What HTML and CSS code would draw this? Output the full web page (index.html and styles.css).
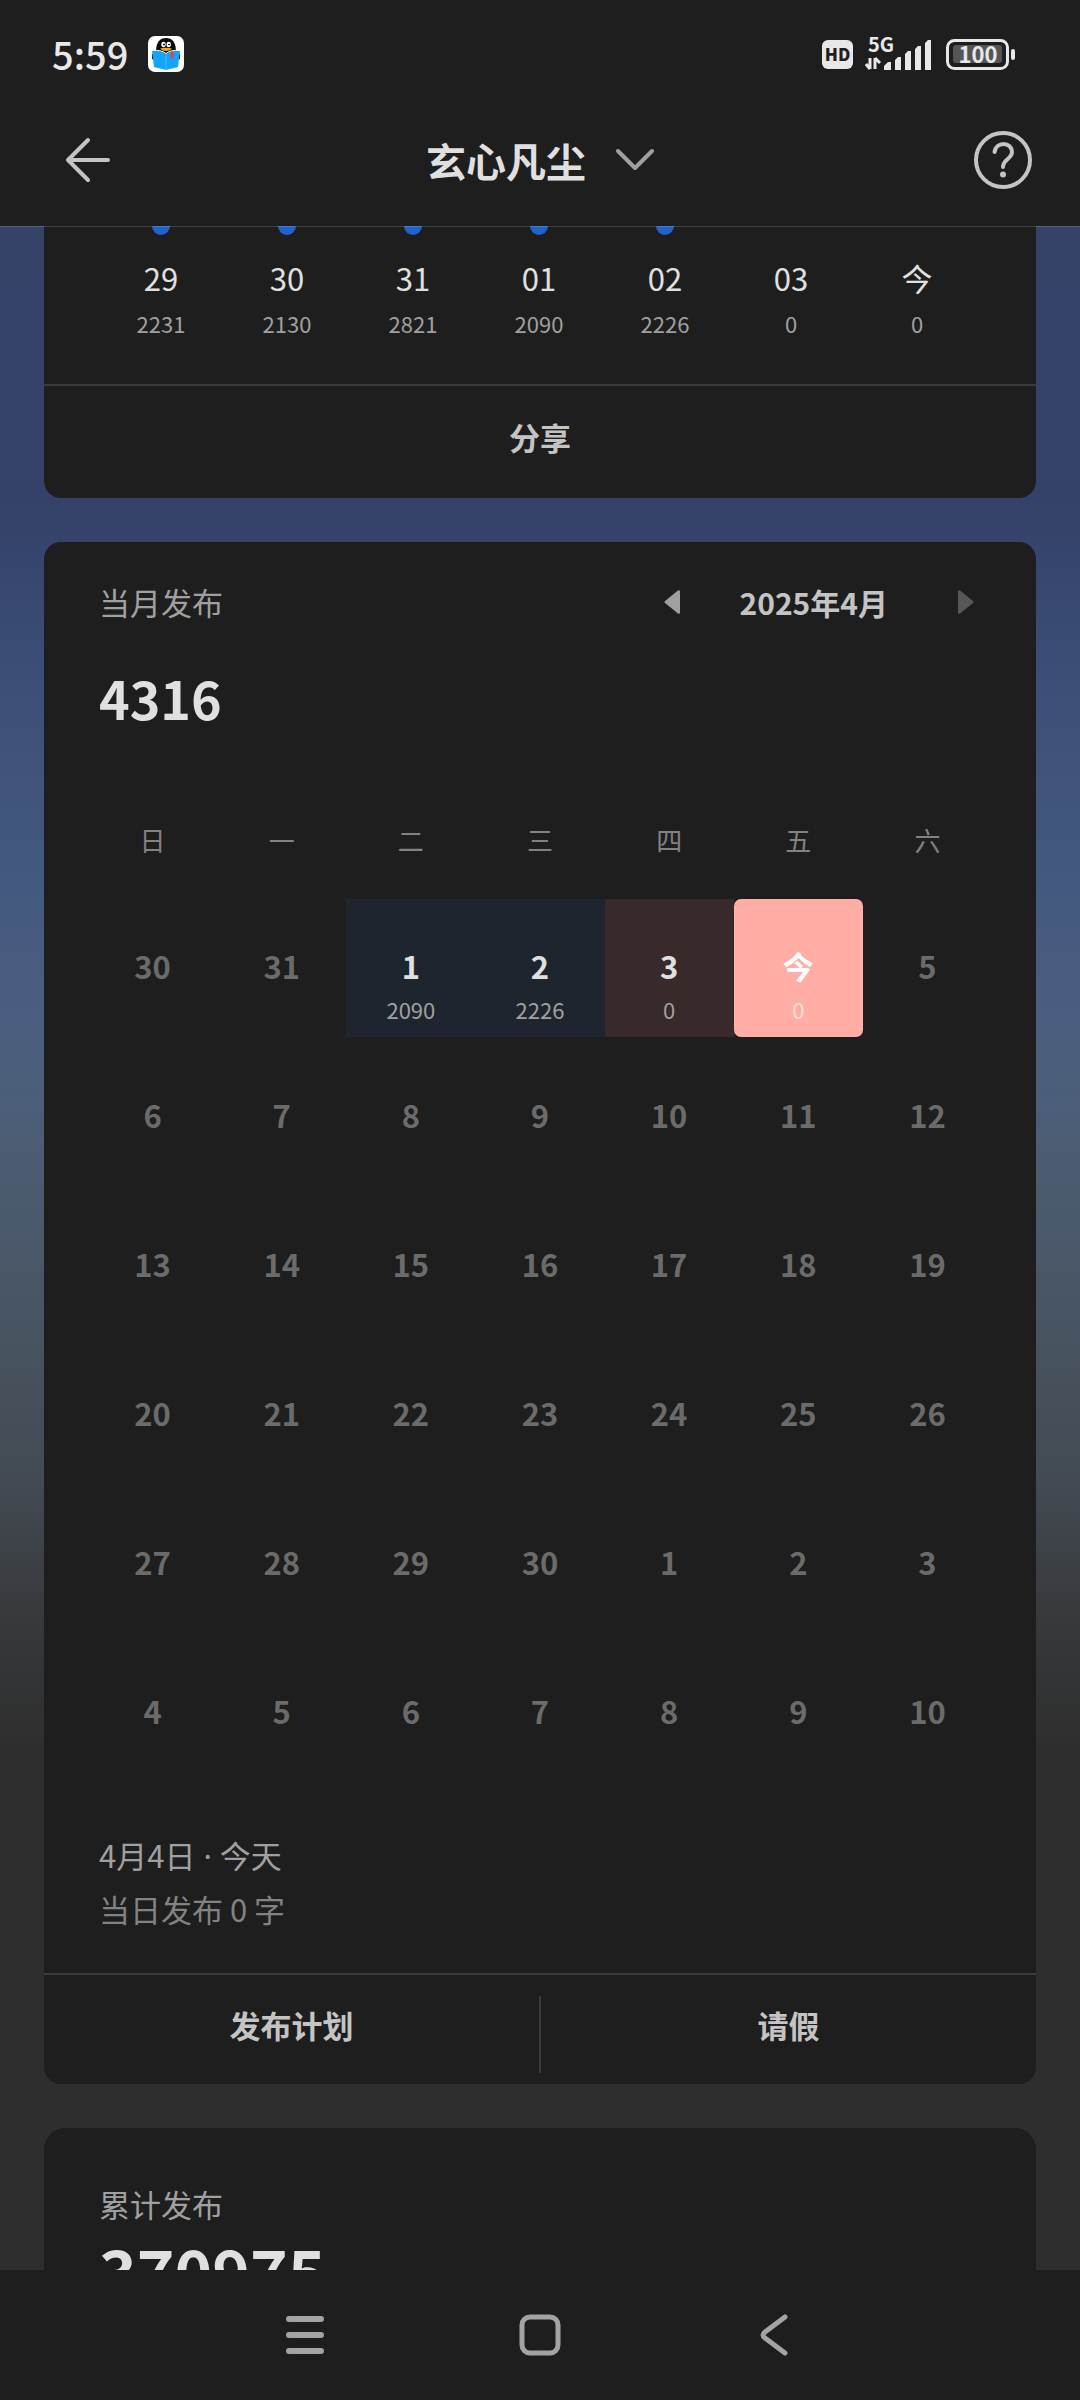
FILE: index.html
```
<!DOCTYPE html>
<html lang="zh-CN">
<head>
    <meta charset="UTF-8">
    <meta name="viewport" content="width=device-width, initial-scale=1.0">
    <title>玄心凡尘</title>
    <link rel="stylesheet" href="styles.css">
</head>
<body>
    <header class="header">
        <div class="status-bar">
            <span class="time">5:59</span>
            <svg class="app-icon" width="36" height="36" viewBox="0 0 36 36" aria-hidden="true">
                <rect width="36" height="36" rx="7" fill="#fff"/>
                <path d="M8 16C8 6 12 2 18 2s10 4 10 14l-10 4z" fill="#0b0b0d"/>
                <path d="M4 18l3 1v5l-3-1zM32 18l-3 1v5l3-1z" fill="#0b0b0d"/>
                <ellipse cx="15.5" cy="8.5" rx="2.2" ry="2.8" fill="#fff"/>
                <ellipse cx="20.7" cy="8.5" rx="2.2" ry="2.8" fill="#fff"/>
                <circle cx="16" cy="8.5" r="1" fill="#0b0b0d"/>
                <path d="M20 9q1-2 2 0" stroke="#0b0b0d" fill="none"/>
                <path d="M12 12.5q6-1.5 12 0-2 2.500-6 2.500t-6-2.500z" fill="#f5a81c"/>
                <path d="M4 15q9-1 14 3 5-4 14-3l-2 16-12 3-12-3z" fill="#12a5fb"/>
                <path d="M4 14.500q9-1 14 3 5-4 14-3" stroke="#fff" fill="none"/>
                <path d="M18 19v15" stroke="#4dbcff"/>
                <path d="M22.500 16l3-1v8l-1.500-1-1.500 1z" fill="#d2455e"/>
            </svg>
            <svg class="status-icons" width="196" height="60" viewBox="0 -12 196 60" aria-hidden="true">
                <rect x="2" y="4" width="31" height="29" rx="6" fill="#e8e8e8"/>
                <text class="status-hd" x="17.5" y="25" text-anchor="middle">HD</text>
                <text class="status-5g" x="48" y="16">5G</text>
                <path d="M50 22v11M50 33l-4-5M55 33V22M55 22l5 5" stroke="#e8e8e8" stroke-width="3" fill="none"/>
                <path d="M64 34v-4l4-4h3v8zM75 34V24l3-3h3v13zM85 34V18l3-3h3v19zM95 34V13l3-3h3v24zM105 34V7l3-3h3v30z" fill="#e8e8e8"/>
                <rect x="127.5" y="4.5" width="60" height="28" rx="7" fill="none" stroke="#e8e8e8" stroke-width="3"/>
                <rect x="133" y="9" width="49" height="18" rx="3" fill="#555"/>
                <text class="status-battery" x="158" y="27" text-anchor="middle">100</text>
                <rect x="191" y="13" width="4" height="11" rx="2" fill="#e8e8e8"/>
            </svg>
        </div>
        <div class="toolbar">
            <button class="icon-btn back" aria-label="返回">
                <svg width="48" height="48" viewBox="0 0 48 48" fill="none" stroke="#c4c4c4" stroke-width="4" stroke-linecap="round" stroke-linejoin="round">
                    <path d="M24 4L4 24l20 20M4 24h40"/>
                </svg>
            </button>
            <button class="book-select">
                <span>玄心凡尘</span>
                <svg width="38" height="24" viewBox="0 0 38 24" fill="none" stroke="#a0a0a0" stroke-width="4" stroke-linecap="round" stroke-linejoin="round">
                    <path d="M2 3l17 17L36 3"/>
                </svg>
            </button>
            <button class="icon-btn help" aria-label="帮助">
                <svg width="60" height="60" viewBox="0 0 60 60" fill="none" stroke="#c4c4c4" stroke-width="4" stroke-linecap="round">
                    <circle cx="30" cy="30" r="27"/>
                    <path d="M21.500 22c1-5 4.500-8 9-8 5 0 8.500 3.500 8.500 8 0 7-9 7-9 15"/>
                    <circle cx="30" cy="44.500" r="3" fill="#c4c4c4" stroke="none"/>
                </svg>
            </button>
        </div>
    </header>

    <main class="content">
        <section class="card chart-card">
            <ol class="week">
                <li><i class="dot"></i><span class="week-day">29</span><span class="count">2231</span></li>
                <li><i class="dot"></i><span class="week-day">30</span><span class="count">2130</span></li>
                <li><i class="dot"></i><span class="week-day">31</span><span class="count">2821</span></li>
                <li><i class="dot"></i><span class="week-day">01</span><span class="count">2090</span></li>
                <li><i class="dot"></i><span class="week-day">02</span><span class="count">2226</span></li>
                <li><i class="dot none"></i><span class="week-day">03</span><span class="count">0</span></li>
                <li><i class="dot none"></i><span class="week-day">今</span><span class="count">0</span></li>
            </ol>
            <div class="actions">
                <button>分享</button>
            </div>
        </section>

        <section class="card calendar-card">
            <div class="calendar-top">
                <h2 class="label">当月发布</h2>
                <div class="month-nav">
                    <button class="month-btn" aria-label="上个月">
                        <svg width="16" height="24" viewBox="0 0 16 24"><path d="M16 1.500v21q0 2-2 1L1 13q-1-1 0-2L14 .5q2-1 2 1z" fill="#a0a0a0"/></svg>
                    </button>
                    <span class="month">2025年4月</span>
                    <button class="month-btn next" aria-label="下个月">
                        <svg width="16" height="24" viewBox="0 0 16 24"><path d="M0 1.500v21q0 2 2 1L15 13q1-1 0-2L2 .5q-2-1-2 1z" fill="#575757"/></svg>
                    </button>
                </div>
            </div>
            <p class="month-total">4316</p>

            <table class="calendar">
                <thead>
                    <tr><th>日</th><th>一</th><th>二</th><th>三</th><th>四</th><th>五</th><th>六</th></tr>
                </thead>
                <tbody>
                    <tr>
                        <td>30</td>
                        <td>31</td>
                        <td class="done">1<span class="count">2090</span></td>
                        <td class="done">2<span class="count">2226</span></td>
                        <td class="missed">3<span class="count">0</span></td>
                        <td class="today">今<span class="count">0</span></td>
                        <td>5</td>
                    </tr>
                    <tr><td>6</td><td>7</td><td>8</td><td>9</td><td>10</td><td>11</td><td>12</td></tr>
                    <tr><td>13</td><td>14</td><td>15</td><td>16</td><td>17</td><td>18</td><td>19</td></tr>
                    <tr><td>20</td><td>21</td><td>22</td><td>23</td><td>24</td><td>25</td><td>26</td></tr>
                    <tr><td>27</td><td>28</td><td>29</td><td>30</td><td>1</td><td>2</td><td>3</td></tr>
                    <tr><td>4</td><td>5</td><td>6</td><td>7</td><td>8</td><td>9</td><td>10</td></tr>
                </tbody>
            </table>

            <div class="summary">
                <p>4月4日<span class="sep"> · </span>今天</p>
                <p class="muted">当日发布 0 字</p>
            </div>
            <div class="actions">
                <button>发布计划</button>
                <button>请假</button>
            </div>
        </section>

        <section class="card total-card">
            <h2 class="label">累计发布</h2>
            <p class="total">370975</p>
        </section>
    </main>

    <nav class="nav-bar">
        <button aria-label="菜单">
            <svg width="44" height="44" viewBox="0 0 44 44" stroke="#a3a3a3" stroke-width="6" stroke-linecap="round">
                <path d="M6 6h32M6 22h32M6 38h32"/>
            </svg>
        </button>
        <button aria-label="主页">
            <svg width="44" height="44" viewBox="0 0 44 44" fill="none" stroke="#a3a3a3" stroke-width="5">
                <rect x="4" y="4" width="36" height="36" rx="8"/>
            </svg>
        </button>
        <button aria-label="返回">
            <svg width="44" height="44" viewBox="0 0 44 44" fill="none" stroke="#a3a3a3" stroke-width="5" stroke-linecap="round">
                <path d="M32 4L12 19q-4 3 0 6l20 15"/>
            </svg>
        </button>
    </nav>
</body>
</html>
```
FILE: styles.css
```
* {
    box-sizing: border-box;
    margin: 0;
    padding: 0;
}
body {
    display: flex;
    flex-direction: column;
    height: 100vh;
    background-color: #1e1e1e;
    color: #e0e0e0;
    font-family: 'Noto Sans CJK SC', 'Noto Sans', sans-serif;
    font-size: 31px;
    line-height: 40px;
    overflow: hidden;
}
button {
    background: none;
    border: none;
    color: inherit;
    font: inherit;
    cursor: pointer;
}
svg {
    display: block;
}

/* header */
.header {
    position: relative;
    z-index: 1;
    margin-bottom: -1px;
    background-color: #1e1e1e;
    background-clip: padding-box;
    border-bottom: 1px solid rgba(255, 255, 255, 0.15);
}
.status-bar {
    display: flex;
    align-items: center;
    height: 108px;
    padding: 0 64px 0 52px;
    color: #e8e8e8;
}
.time {
    font-size: 38px;
    font-weight: 500;
}
.app-icon {
    margin-left: 20px;
}
.status-icons {
    margin-left: auto;
}
.status-hd {
    font-size: 17px;
    font-weight: 900;
    fill: #1e1e1e;
}
.status-5g {
    font-size: 20px;
    font-weight: 700;
    fill: #e8e8e8;
}
.status-battery {
    font-size: 22px;
    font-weight: 700;
    fill: #e8e8e8;
}
.toolbar {
    display: grid;
    grid-template-columns: 1fr auto 1fr;
    align-items: center;
    height: 118px;
    padding: 0 47px 14px;
}
.icon-btn {
    justify-self: start;
}
.back {
    padding-left: 17px;
}
.help {
    justify-self: end;
}
.book-select {
    display: flex;
    align-items: center;
    gap: 30px;
    font-size: 40px;
    font-weight: 700;
}

/* cards */
.content {
    flex: 1;
    display: flex;
    flex-direction: column;
    gap: 44px;
    min-height: 0;
    padding: 0 44px;
    overflow: hidden;
    background: linear-gradient(#364369 0, #344169 277px, #3c4f78 459px, #43587f 641px, #4a5f7f 798px, #4c5d74 919px, #47535f 1125px, #434a52 1259px, #36383a 1404px, #2e2e2e 1525px);
}
.card {
    flex-shrink: 0;
    background-color: #1e1e1e;
    border-radius: 17px;
}
.label {
    font-size: 31px;
    font-weight: 400;
    color: #a0a0a0;
}
.count {
    display: block;
    font-size: 22px;
    font-weight: 400;
    line-height: 24px;
    color: #a0a0a0;
}
.actions {
    display: flex;
    padding: 21px 0 11px;
    border-top: 2px solid #3a3a3a;
}
.actions button {
    flex: 1;
    height: 77px;
    padding-bottom: 20px;
    font-weight: 700;
    color: #c4c4c4;
}
.actions button + button {
    border-left: 2px solid #3a3a3a;
}

/* last 7 days */
.chart-card {
    margin-top: -9px;
    border-top-left-radius: 0;
    border-top-right-radius: 0;
}
.chart-card .actions button {
    height: 80px;
}
.week {
    display: flex;
    padding: 0 56px 49px 54px;
    list-style: none;
    text-align: center;
}
.week li {
    flex: 1;
}
.dot {
    display: block;
    width: 18px;
    height: 18px;
    margin: 0 auto;
    border-radius: 50%;
    background-color: #2162cc;
}
.none {
    visibility: hidden;
}
.week-day {
    display: block;
    margin: 23px 0 13px;
}

/* calendar */
.calendar-card > :not(.actions) {
    margin-left: 44px;
    margin-right: 44px;
}
.calendar-top {
    display: flex;
    justify-content: space-between;
    align-items: center;
    padding: 40px 0 0 11px;
}
.month-nav {
    display: flex;
    align-items: center;
    gap: 42px;
}
.month {
    font-size: 30px;
    font-weight: 700;
    color: #c4c4c4;
}
.month-btn {
    display: flex;
    justify-content: center;
    width: 52px;
}
.next {
    margin-left: 10px;
}
.month-total {
    padding-left: 11px;
    margin-top: 46px;
    font-size: 52px;
    font-weight: 700;
    line-height: 60px;
}
.calendar {
    width: calc(100% - 88px);
    margin-top: 53px;
    table-layout: fixed;
    border-spacing: 0 11px;
    text-align: center;
}
.calendar th {
    height: 96px;
    font-size: 26px;
    font-weight: 400;
    color: #828282;
}
.calendar td {
    height: 138px;
    padding-top: 47px;
    vertical-align: top;
    font-size: 31px;
    font-weight: 700;
    color: #6b6b6b;
}
.calendar .count {
    margin-top: 11px;
}
.calendar .done {
    background-color: #1f252e;
    color: #e0e0e0;
}
.calendar .missed {
    background-color: #38292a;
    color: #e0e0e0;
}
.calendar .today {
    background-color: #ffada5;
    border-radius: 7px;
    color: #fff;
}
.today .count {
    color: #ffdeda;
}
.summary {
    display: flex;
    flex-direction: column;
    gap: 13px;
    padding: 42px 11px 44px;
    color: #a0a0a0;
}
.sep {
    font-family: 'Noto Sans', sans-serif;
}
.muted {
    color: #828282;
}

/* total */
.total-card {
    padding: 56px 55px 44px;
    border-radius: 21px;
}
.total {
    font-size: 64px;
    font-weight: 700;
    line-height: 92px;
}

/* system navigation */
.nav-bar {
    display: flex;
    justify-content: center;
    height: 130px;
    background-color: #1e1e1e;
    z-index: 1;
}
.nav-bar button {
    display: flex;
    align-items: center;
    justify-content: center;
    width: 235px;
}
```
